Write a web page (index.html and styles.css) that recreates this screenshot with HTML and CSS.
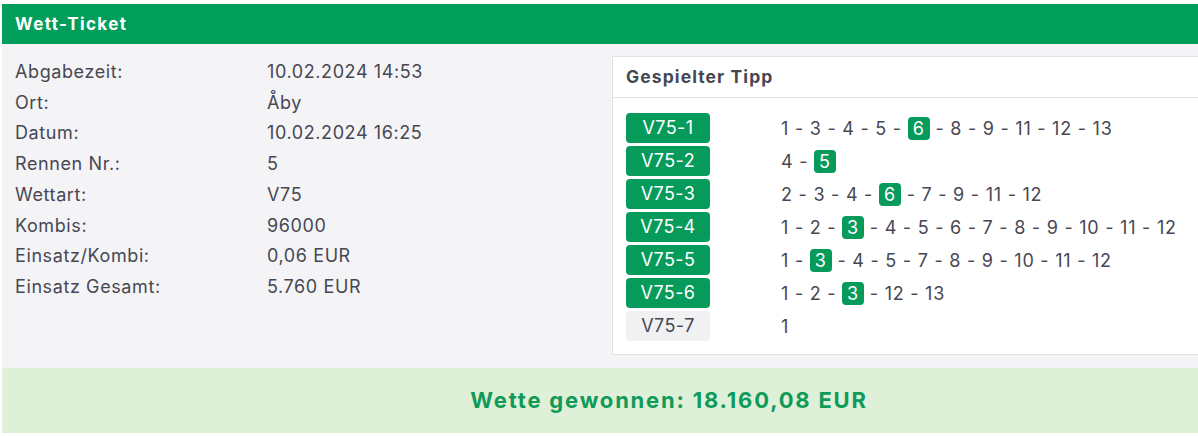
FILE: index.html
```html
<!DOCTYPE html>
<html lang="de">
<head>
  <meta charset="UTF-8">
  <meta name="viewport" content="width=device-width, initial-scale=1.0">
  <title>Wett-Ticket</title>
  <link rel="stylesheet" href="styles.css">
</head>
<body>
  <div class="ticket">
    <div class="ticket-head">Wett-Ticket</div>

    <div class="ticket-body">
      <dl class="details">
        <dt>Abgabezeit:</dt><dd>10.02.2024 14:53</dd>
        <dt>Ort:</dt><dd>Åby</dd>
        <dt>Datum:</dt><dd>10.02.2024 16:25</dd>
        <dt>Rennen Nr.:</dt><dd>5</dd>
        <dt>Wettart:</dt><dd>V75</dd>
        <dt>Kombis:</dt><dd>96000</dd>
        <dt>Einsatz/Kombi:</dt><dd>0,06 EUR</dd>
        <dt>Einsatz Gesamt:</dt><dd>5.760 EUR</dd>
      </dl>

      <div class="tipp">
        <div class="tipp-head">Gespielter Tipp</div>
        <div class="tipp-list">
          <div class="leg">
            <span class="badge won">V75-1</span>
            <span class="picks">1 - 3 - 4 - 5 - <b class="hit">6</b> - 8 - 9 - 11 - 12 - 13</span>
          </div>
          <div class="leg">
            <span class="badge won">V75-2</span>
            <span class="picks">4 - <b class="hit">5</b></span>
          </div>
          <div class="leg">
            <span class="badge won">V75-3</span>
            <span class="picks">2 - 3 - 4 - <b class="hit">6</b> - 7 - 9 - 11 - 12</span>
          </div>
          <div class="leg">
            <span class="badge won">V75-4</span>
            <span class="picks">1 - 2 - <b class="hit">3</b> - 4 - 5 - 6 - 7 - 8 - 9 - 10 - 11 - 12</span>
          </div>
          <div class="leg">
            <span class="badge won">V75-5</span>
            <span class="picks">1 - <b class="hit">3</b> - 4 - 5 - 7 - 8 - 9 - 10 - 11 - 12</span>
          </div>
          <div class="leg">
            <span class="badge won">V75-6</span>
            <span class="picks">1 - 2 - <b class="hit">3</b> - 12 - 13</span>
          </div>
          <div class="leg">
            <span class="badge">V75-7</span>
            <span class="picks">1</span>
          </div>
        </div>
      </div>
    </div>

    <div class="ticket-result">Wette gewonnen: 18.160,08 EUR</div>
  </div>
</body>
</html>
```

FILE: styles.css
```css
* {
  margin: 0;
  padding: 0;
  box-sizing: border-box;
}

body {
  background-color: #fff;
  color: #474753;
  font-family: Inter, 'Liberation Sans', sans-serif;
  overflow: hidden;
  padding: 4px 0 0 2px;
}

.ticket {
  width: 1334px;
}

.ticket-head {
  background-color: #019d5a;
  color: #fff;
  font-size: 17px;
  font-weight: bold;
  letter-spacing: 1.4px;
  height: 40px;
  line-height: 40px;
  padding: 0 13px;
}

.ticket-body {
  background-color: #f4f4f6;
  display: grid;
  grid-template-columns: 598px 1fr;
  align-items: start;
  padding: 12px 12px 13px 12px;
}

.details {
  display: grid;
  grid-template-columns: 252px 1fr;
  align-content: start;
  font-size: 18px;
  letter-spacing: 0.6px;
  line-height: 30.7px;
  padding: 1px 0 0 1px;
}

.tipp {
  background-color: #fff;
  border: 1px solid #e1e1e6;
}

.tipp-head {
  font-size: 17.5px;
  font-weight: bold;
  letter-spacing: 1.1px;
  height: 41px;
  line-height: 40px;
  padding: 0 13px;
  border-bottom: 1px solid #e1e1e6;
}

.tipp-list {
  display: flex;
  flex-direction: column;
  gap: 3px;
  padding: 15px 13px 13px;
}

.leg {
  display: flex;
  align-items: center;
  height: 30px;
}

.badge {
  width: 84px;
  height: 30px;
  line-height: 30px;
  text-align: center;
  font-size: 18px;
  letter-spacing: 0.4px;
  border-radius: 4px;
  background-color: #f1f1f3;
  margin-right: 71px;
}

.badge.won {
  background-color: #079b5b;
  color: #fff;
}

.picks {
  font-size: 18px;
  letter-spacing: 0.75px;
}

.hit {
  display: inline-block;
  font-weight: normal;
  background-color: #079b5b;
  color: #fff;
  border-radius: 4px;
  padding: 0 5px;
  line-height: 23px;
}

.ticket-result {
  background-color: #dff0d8;
  color: #0f9a5a;
  font-size: 22px;
  font-weight: bold;
  letter-spacing: 1.8px;
  height: 65px;
  line-height: 65px;
  text-align: center;
}
```
